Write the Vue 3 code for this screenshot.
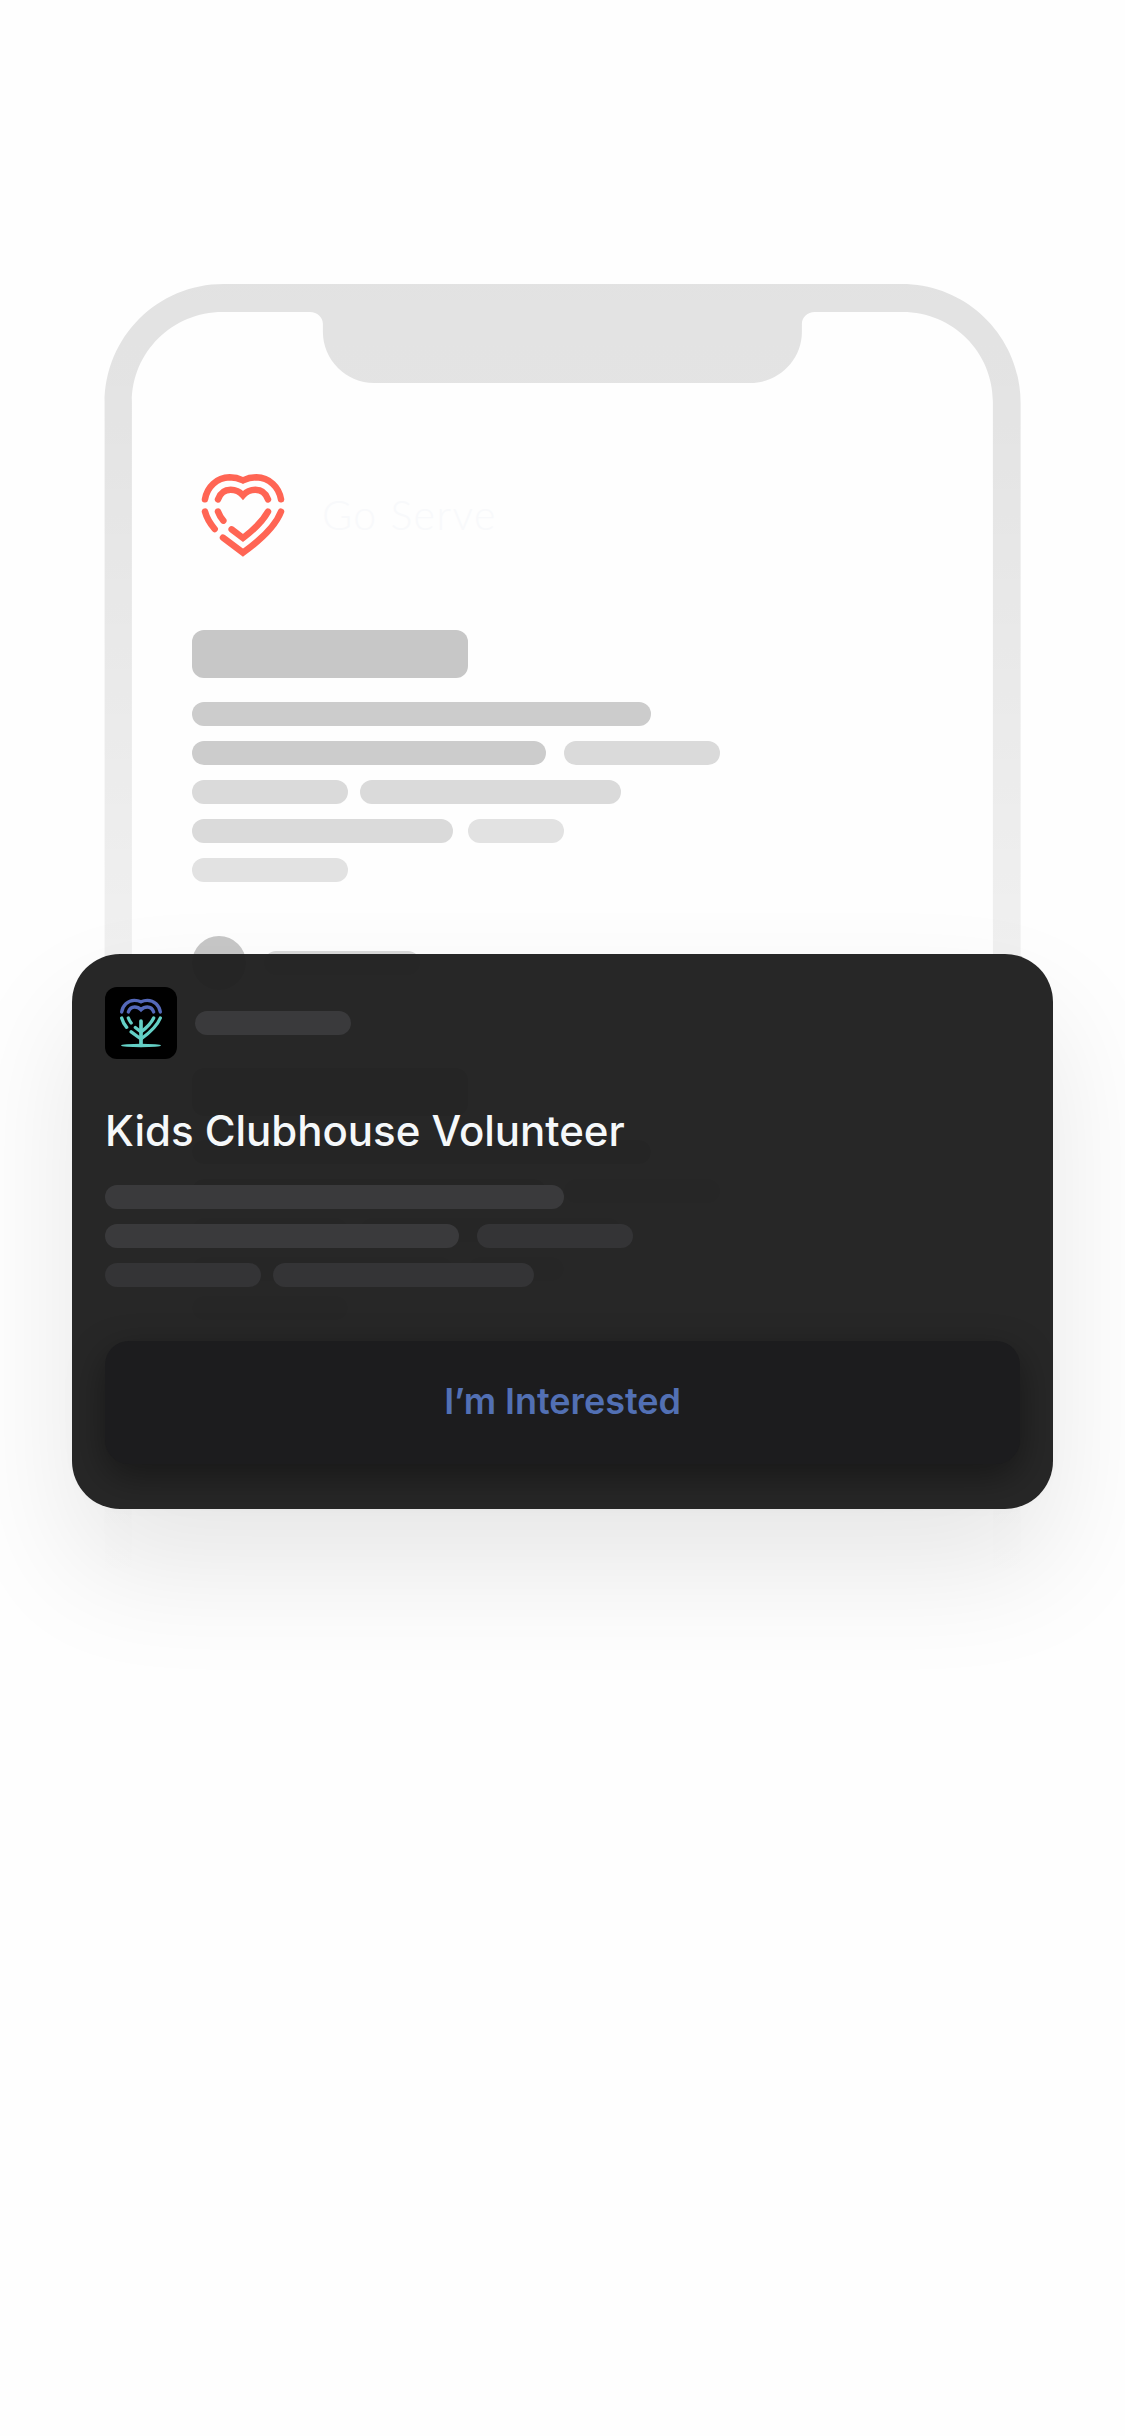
<script setup>
const group = [
  [{ w: 459, tone: 'strong' }],
  [{ w: 354, tone: 'strong' }, { w: 156, tone: 'mid', gap: 18 }],
  [{ w: 156, tone: 'mid' }, { w: 261, tone: 'mid', gap: 12 }],
  [{ w: 261, tone: 'mid' }, { w: 96, tone: 'soft', gap: 15 }],
  [{ w: 156, tone: 'soft' }],
]
const cardLines = [
  [{ w: 459, tone: 'strong' }],
  [{ w: 354, tone: 'strong' }, { w: 156, tone: 'mid', gap: 18 }],
  [{ w: 156, tone: 'mid' }, { w: 261, tone: 'mid', gap: 12 }],
]
const barStyle = (bar) => ({ width: bar.w + 'px', marginLeft: (bar.gap || 0) + 'px' })
</script>

<template>
  <main class="scene">
    <section class="phone">
      <svg class="frame" width="917" height="1306" viewBox="0 0 917 1306">
        <defs>
          <linearGradient id="fade" x1="0" y1="0" x2="0" y2="1">
            <stop offset="0" stop-color="#000" stop-opacity="0.109" />
            <stop offset="0.1" stop-color="#000" stop-opacity="0.103" />
            <stop offset="1" stop-color="#000" stop-opacity="0" />
          </linearGradient>
        </defs>
        <path
          transform="translate(0.6 0)"
          fill="url(#fade)"
          d="M0 1306V119C0 53 53 0 119 0H797C863 0 916 53 916 119V1306H888.3V118C888.3 68 848 28 798 28H710C703 28 697.3 33 697.3 40V48C697.3 76 674 99 646 99H269.500C241.500 99 218.300 76 218.300 48V40C218.300 33 212.500 28 205.500 28H118C68 28 27.300 68 27.300 118V1306Z"
        />
      </svg>

      <header class="brand">
        <svg class="heart" width="86" height="86" viewBox="60 67 258 258">
          <g fill="none" stroke="#ff6554" stroke-width="19.500" stroke-linecap="round">
            <path d="M75 149C81 112 110 84 149 83Q170 83 189 92Q208 83 229 83C268 84 297 112 303 149" />
            <path d="M114 149C121 130 135 120.500 152 120.500C168 120.500 178 125 189 137C200 125 210 120.500 226 120.500C243 120.500 257 130 264 149" />
            <path d="M75 186Q82 212 104 238" />
            <path d="M114 186Q119 200 130 213" />
            <path d="M129 264L189 309Q281 243 303 186" />
            <path d="M155 239L189 265Q243 224 264 186" />
          </g>
        </svg>
        <span class="name">Go Serve</span>
      </header>

      <div class="block">
        <div class="heading"></div>
        <div v-for="(row, i) in group" :key="i" class="row">
          <i v-for="(bar, j) in row" :key="j" class="bar" :class="bar.tone" :style="barStyle(bar)"></i>
        </div>
      </div>

      <div class="author">
        <i class="avatar"></i>
        <i class="bar mid author-line"></i>
      </div>

      <div class="block">
        <div class="heading"></div>
        <div v-for="(row, i) in group" :key="i" class="row">
          <i v-for="(bar, j) in row" :key="j" class="bar" :class="bar.tone" :style="barStyle(bar)"></i>
        </div>
      </div>
    </section>

    <article class="card">
      <div class="card-top">
        <div class="app-icon">
          <svg width="72" height="72" viewBox="45 51 216 216">
            <g fill="none" stroke-width="10" stroke-linecap="round">
              <g stroke="#5468b9">
                <path d="M95 126C98 107 113 91 133 91Q144 91 153 95.500Q162 91 172 91C193 91 208 107 211 126" />
                <path d="M115 126C118 117 125 111 134 111C142 111 147 113.500 153 119.500C159 113.500 164 111 172 111C181 111 188 117 191 126" />
              </g>
              <g stroke="#64d0c6">
                <path d="M95 144Q99 159 110 172" />
                <path d="M115 144Q118 152 123.500 159" />
                <path d="M123.500 185.500L153 207Q199 174 211 144" />
                <path d="M136 172.500L153 186Q181 165 191 144" />
                <path d="M153 153V226" stroke-width="11" />
              </g>
            </g>
            <ellipse cx="153" cy="226.500" rx="60" ry="5" fill="#64d0c6" />
          </svg>
        </div>
        <i class="bar strong"></i>
      </div>
      <h1 class="title">Kids Clubhouse Volunteer</h1>
      <div v-for="(row, i) in cardLines" :key="i" class="row">
        <i v-for="(bar, j) in row" :key="j" class="bar" :class="bar.tone" :style="barStyle(bar)"></i>
      </div>
      <button class="action" type="button">I’m Interested</button>
    </article>
  </main>
</template>

<style>
body {
  background: #fefefe;
}
</style>

<style scoped>
.scene {
  position: relative;
  box-sizing: border-box;
  width: 1125px;
  height: 2436px;
  padding-top: 284px;
  overflow: hidden;
  background: #fefefe;
  font-family: Inter, "Liberation Sans", sans-serif;
}
.phone {
  position: relative;
  box-sizing: border-box;
  width: 917px;
  height: 1306px;
  margin-left: 104px;
  padding: 188px 0 0 88px;
}
.frame {
  position: absolute;
  top: 0;
  left: 0;
}
.brand {
  display: flex;
  align-items: center;
  height: 86px;
  padding-left: 8px;
  margin-bottom: 72px;
}
.heart {
  display: block;
}
.name {
  margin-left: 36px;
  font-family: Lato, sans-serif;
  font-weight: 300;
  font-size: 41px;
  line-height: 50px;
  letter-spacing: 1.5px;
  color: #f8f9fb;
}
.heading {
  width: 276px;
  height: 48px;
  margin-bottom: 24px;
  border-radius: 12px;
  background: #c7c7c7;
}
.row {
  display: flex;
  margin-bottom: 15px;
}
.bar {
  display: block;
  width: 156px;
  height: 24px;
  border-radius: 12px;
}
.strong { background: #cccccc; }
.mid { background: #dadada; }
.soft { background: #e2e2e2; }
.author {
  display: flex;
  align-items: center;
  height: 54px;
  margin: 54px 0 78px;
}
.avatar {
  width: 54px;
  height: 54px;
  border-radius: 50%;
  background: #c7c7c7;
}
.author-line {
  margin-left: 18px;
}
.block .row:last-child {
  margin-bottom: 0;
}
.card {
  position: absolute;
  top: 954px;
  left: 72px;
  box-sizing: border-box;
  width: 981px;
  height: 555px;
  padding: 33px;
  border-radius: 48px;
  background: rgba(30, 30, 30, 0.96);
  box-shadow: 0 60px 120px rgba(0, 0, 0, 0.095);
}
.card-top {
  display: flex;
  align-items: center;
  gap: 18px;
}
.app-icon {
  width: 72px;
  height: 72px;
  border-radius: 12px;
  background: #000;
}
.app-icon svg {
  display: block;
}
.title {
  margin: 46px 0 28px;
  font-size: 42px;
  font-weight: 500;
  line-height: 52px;
  letter-spacing: -0.02px;
  white-space: nowrap;
  color: #f5f8fa;
}
.card .strong { background: #3a3a3c; }
.card .mid { background: #343436; }
.action {
  display: block;
  width: 915px;
  height: 123px;
  margin-top: 54px;
  padding: 0 0 3px;
  border: 0;
  border-radius: 24px;
  background: #1c1c1e;
  box-shadow: 0 12px 36px rgba(0, 0, 0, 0.4);
  font-family: inherit;
  font-size: 36px;
  font-weight: 600;
  letter-spacing: -0.05px;
  color: #5270b4;
}
</style>
